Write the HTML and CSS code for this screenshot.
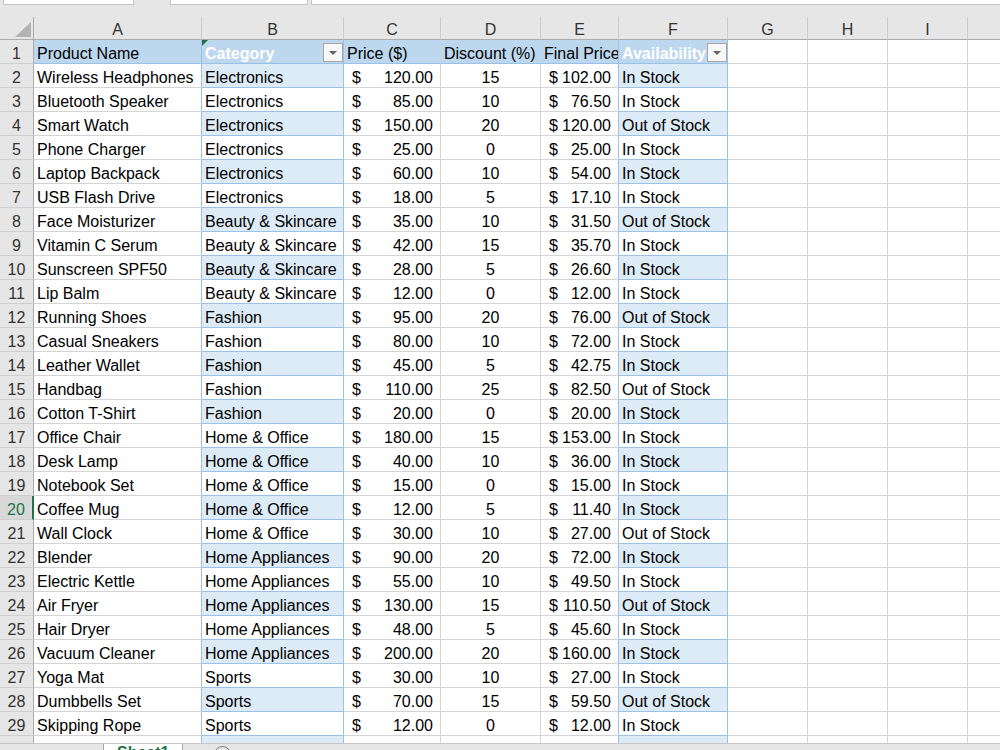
FILE: index.html
```html
<!DOCTYPE html>
<html lang="en">
<head>
    <meta charset="UTF-8">
    <meta name="viewport" content="width=device-width, initial-scale=1.0">
    <title>Product Sheet</title>
    <link rel="stylesheet" href="styles.css">
</head>
<body>
    <div class="app">
        <div class="topbar">
            <div class="box box-name"></div>
            <div class="box box-fx"></div>
            <div class="box box-formula"></div>
        </div>

        <div class="sheet">
            <table class="grid">
                <colgroup>
                    <col class="w-hdr">
                    <col class="w-a">
                    <col class="w-b">
                    <col class="w-c">
                    <col class="w-d">
                    <col class="w-e">
                    <col class="w-f">
                    <col class="w-x">
                    <col class="w-x">
                    <col class="w-x">
                    <col class="w-x">
                </colgroup>
                <thead>
                    <tr class="colrow">
                        <th class="corner"><span class="corner-tri"></span></th>
                        <th>A</th>
                        <th>B</th>
                        <th>C</th>
                        <th>D</th>
                        <th>E</th>
                        <th>F</th>
                        <th>G</th>
                        <th>H</th>
                        <th>I</th>
                        <th>J</th>
                    </tr>
                </thead>
                <tbody id="rows">
                    <tr>
                        <td class="rowhead">1</td>
                        <td class="hd edge">Product Name</td>
                        <td class="hd band hd-filter">
                            <span class="err"></span>
                            <div class="filter"><span>Category</span><span class="drop"></span></div>
                        </td>
                        <td class="hd">Price ($)</td>
                        <td class="hd">Discount (%)</td>
                        <td class="hd edge">Final Price</td>
                        <td class="hd band hd-filter">
                            <div class="filter"><span>Availability</span><span class="drop"></span></div>
                        </td>
                        <td></td>
                        <td></td>
                        <td></td>
                        <td></td>
                    </tr>
                </tbody>
            </table>
        </div>

        <div class="tabs">
            <div class="tab-nav"></div>
            <div class="tab">Sheet1</div>
            <div class="tab-add"></div>
        </div>
    </div>

    <script>
    document.addEventListener('DOMContentLoaded', function() {
        // name, category, price, discount, availability
        const products = [
            ["Wireless Headphones", "Electronics", 120, 15, "In Stock"],
            ["Bluetooth Speaker", "Electronics", 85, 10, "In Stock"],
            ["Smart Watch", "Electronics", 150, 20, "Out of Stock"],
            ["Phone Charger", "Electronics", 25, 0, "In Stock"],
            ["Laptop Backpack", "Electronics", 60, 10, "In Stock"],
            ["USB Flash Drive", "Electronics", 18, 5, "In Stock"],
            ["Face Moisturizer", "Beauty & Skincare", 35, 10, "Out of Stock"],
            ["Vitamin C Serum", "Beauty & Skincare", 42, 15, "In Stock"],
            ["Sunscreen SPF50", "Beauty & Skincare", 28, 5, "In Stock"],
            ["Lip Balm", "Beauty & Skincare", 12, 0, "In Stock"],
            ["Running Shoes", "Fashion", 95, 20, "Out of Stock"],
            ["Casual Sneakers", "Fashion", 80, 10, "In Stock"],
            ["Leather Wallet", "Fashion", 45, 5, "In Stock"],
            ["Handbag", "Fashion", 110, 25, "Out of Stock"],
            ["Cotton T-Shirt", "Fashion", 20, 0, "In Stock"],
            ["Office Chair", "Home & Office", 180, 15, "In Stock"],
            ["Desk Lamp", "Home & Office", 40, 10, "In Stock"],
            ["Notebook Set", "Home & Office", 15, 0, "In Stock"],
            ["Coffee Mug", "Home & Office", 12, 5, "In Stock"],
            ["Wall Clock", "Home & Office", 30, 10, "Out of Stock"],
            ["Blender", "Home Appliances", 90, 20, "In Stock"],
            ["Electric Kettle", "Home Appliances", 55, 10, "In Stock"],
            ["Air Fryer", "Home Appliances", 130, 15, "Out of Stock"],
            ["Hair Dryer", "Home Appliances", 48, 5, "In Stock"],
            ["Vacuum Cleaner", "Home Appliances", 200, 20, "In Stock"],
            ["Yoga Mat", "Sports", 30, 10, "In Stock"],
            ["Dumbbells Set", "Sports", 70, 15, "Out of Stock"],
            ["Skipping Rope", "Sports", 12, 0, "In Stock"],
            ["Resistance Bands", "Sports", 25, 10, "In Stock"]
        ];

        let tableBody = document.getElementById('rows');

        products.forEach((p, i) => {
            let n = i + 2;
            let band = n % 2 === 0 ? 'band on' : 'band';
            let finalPrice = (p[2] * (100 - p[3]) / 100).toFixed(2);
            let row = document.createElement('tr');
            row.innerHTML = `
                <td class="rowhead${n === 20 ? ' sel' : ''}">${n}</td>
                <td class="edge">${p[0]}</td>
                <td class="${band}">${p[1].replace('&', '&amp;')}</td>
                <td><div class="money"><span>$</span><span>${p[2].toFixed(2)}</span></div></td>
                <td class="num">${p[3]}</td>
                <td class="edge"><div class="money"><span>$</span><span>${finalPrice}</span></div></td>
                <td class="${band}">${p[4]}</td>
                <td></td>
                <td></td>
                <td></td>
                <td></td>
            `;
            tableBody.appendChild(row);
        });
    });
    </script>
</body>
</html>
```

FILE: styles.css
```css
* {
    box-sizing: border-box;
}

body {
    margin: 0;
    font-family: "Liberation Sans", Arial, sans-serif;
    font-size: 16px;
    color: #000;
    background: #fff;
    overflow: hidden;
}

.app {
    display: flex;
    flex-direction: column;
    height: 750px;
}

/* name box / formula bar, only their bottom edge shows */
.topbar {
    flex: none;
    height: 17px;
    display: flex;
    align-items: flex-start;
    background: #e6e6e6;
}

.box {
    height: 5px;
    background: #fff;
    border: 1px solid #c6c6c6;
    border-top: none;
}

.box-name { margin-left: 3px; width: 131px; }
.box-fx { margin-left: 36px; width: 138px; }
.box-formula { margin-left: 3px; flex: 1; border-right: none; }

.sheet {
    flex: 1;
    overflow: hidden;
}

.grid {
    border-collapse: separate;
    border-spacing: 0;
    table-layout: fixed;
    width: 1048px;
}

.w-hdr { width: 34px; }
.w-a { width: 168px; }
.w-b { width: 142px; }
.w-c { width: 97px; }
.w-d { width: 100px; }
.w-e { width: 78px; }
.w-f { width: 109px; }
.w-x { width: 80px; }

.grid tr {
    height: 24px;
}

.grid td,
.grid th {
    padding: 0 3px;
    border-right: 1px solid #d4d4d4;
    border-bottom: 1px solid #d4d4d4;
    white-space: nowrap;
    overflow: hidden;
    vertical-align: bottom;
    line-height: 18px;
    font-weight: normal;
    text-align: left;
}

/* column letters */
.grid .colrow {
    height: 23px;
}

.grid .colrow th {
    background: #e6e6e6;
    color: #333;
    text-align: center;
    border-right-color: #cacaca;
    border-bottom-color: #ababab;
}

.grid .colrow th.corner {
    border-right-color: #ababab;
    padding: 0 2px 2px 0;
}

.corner-tri {
    display: block;
    width: 0;
    margin-left: auto;
    border-left: 16px solid transparent;
    border-bottom: 15px solid #b4b4b4;
}

/* row numbers */
.grid td.rowhead {
    padding: 0;
    background: #e6e6e6;
    color: #333;
    text-align: center;
    border-right-color: #ababab;
    border-bottom-color: #cfcfcf;
}

.grid td.rowhead.sel {
    background: #d8d8d8;
    color: #217346;
    border-right: 2px solid #217346;
}

/* row 1 */
.grid td.hd {
    background: #bdd7ee;
    border-right-color: #bdd7ee;
    border-bottom-color: #9bc2e6;
}

.grid td.edge,
.grid td.band {
    border-right-color: #9bc2e6;
}

.grid td.band {
    border-bottom-color: #9bc2e6;
}

.grid td.on {
    background: #ddebf7;
}

.grid td.hd-filter {
    position: relative;
    padding-right: 0;
    color: #fff;
    font-weight: bold;
}

.filter {
    display: flex;
    align-items: flex-end;
    justify-content: space-between;
}

.drop {
    width: 20px;
    height: 19px;
    margin-bottom: 1px;
    display: flex;
    align-items: center;
    justify-content: center;
    background: #f7f7f7;
    border: 1px solid #a6a6a6;
}

.drop::after {
    content: "";
    border-left: 4px solid transparent;
    border-right: 4px solid transparent;
    border-top: 4px solid #666;
}

.err {
    position: absolute;
    top: 0;
    left: 0;
    border-top: 6px solid #217346;
    border-right: 6px solid transparent;
}

/* accounting format: $ on the left, amount on the right */
.money {
    display: flex;
    justify-content: space-between;
    padding: 0 4px 0 5px;
}

.num {
    text-align: center !important;
}

/* sheet tabs, mostly cut off at the bottom */
.tabs {
    flex: none;
    height: 7px;
    display: flex;
    align-items: flex-start;
    overflow: hidden;
    background: #e6e6e6;
    border-top: 1px solid #c6c6c6;
}

.tab-nav {
    width: 104px;
    height: 100%;
    border-right: 1px solid #a6a6a6;
}

.tab {
    width: 79px;
    height: 100%;
    padding-left: 13px;
    background: #fff;
    border-right: 1px solid #a6a6a6;
    color: #217346;
    font-weight: bold;
    line-height: 18px;
}

.tab-add {
    flex: none;
    width: 17px;
    height: 17px;
    margin: 2px 0 0 31px;
    border: 1px solid #777;
    border-radius: 50%;
}
```
